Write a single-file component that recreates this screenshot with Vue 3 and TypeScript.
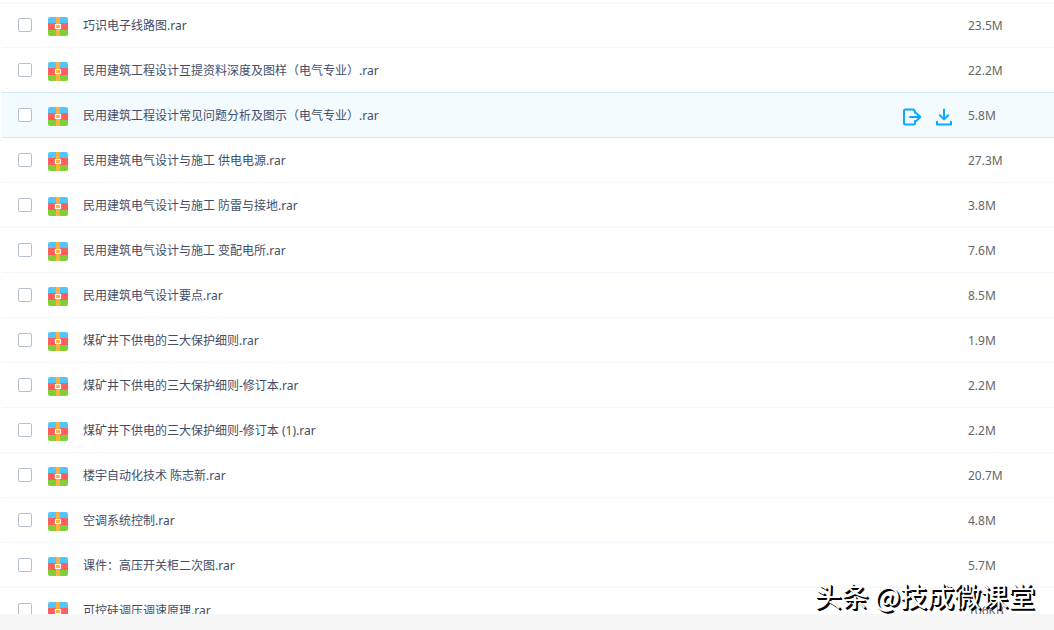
<script setup lang="ts">
import { ref } from 'vue'

interface FileItem {
  name: string
  size: string
  active?: boolean
}

const files: FileItem[] = [
  { name: '巧识电子线路图.rar', size: '23.5M' },
  { name: '民用建筑工程设计互提资料深度及图样（电气专业）.rar', size: '22.2M' },
  { name: '民用建筑工程设计常见问题分析及图示（电气专业）.rar', size: '5.8M', active: true },
  { name: '民用建筑电气设计与施工 供电电源.rar', size: '27.3M' },
  { name: '民用建筑电气设计与施工 防雷与接地.rar', size: '3.8M' },
  { name: '民用建筑电气设计与施工 变配电所.rar', size: '7.6M' },
  { name: '民用建筑电气设计要点.rar', size: '8.5M' },
  { name: '煤矿井下供电的三大保护细则.rar', size: '1.9M' },
  { name: '煤矿井下供电的三大保护细则-修订本.rar', size: '2.2M' },
  { name: '煤矿井下供电的三大保护细则-修订本 (1).rar', size: '2.2M' },
  { name: '楼宇自动化技术 陈志新.rar', size: '20.7M' },
  { name: '空调系统控制.rar', size: '4.8M' },
  { name: '课件：高压开关柜二次图.rar', size: '5.7M' },
  { name: '可控硅调压调速原理.rar', size: '106KB' },
]

const selected = ref<string[]>([])
</script>

<template>
  <div class="page">
    <main class="list">
      <table class="files">
        <tbody>
          <tr v-for="file in files" :key="file.name" :class="{ active: file.active }">
            <td class="name-cell">
              <div class="entry">
                <input
                  v-model="selected"
                  class="check"
                  type="checkbox"
                  :value="file.name"
                  :aria-label="file.name"
                />
                <svg class="archive" viewBox="0 0 20 19" aria-hidden="true">
                  <path fill="#54c5f8" d="M2 0h16a2 2 0 0 1 2 2v4H0V2a2 2 0 0 1 2-2z" />
                  <path fill="#ff5f5c" d="M0 6h20v7H0z" />
                  <path fill="#80cf38" d="M0 13h20v4a2 2 0 0 1-2 2H2a2 2 0 0 1-2-2z" />
                  <path fill="#ffb13d" d="M8 0h4v19H8z" />
                  <path fill="#ffb13d" stroke="#fff" stroke-width="1.2" d="M7.5 7.5h5v4h-5z" />
                </svg>
                <span class="name">{{ file.name }}</span>
                <span v-if="file.active" class="actions">
                  <button type="button" aria-label="分享">
                    <svg viewBox="0 0 20 18" aria-hidden="true">
                      <path d="M13 5V3.2L11.3 1.5H3.5a1.5 1.5 0 0 0-1.5 1.5v12a1.5 1.5 0 0 0 1.5 1.5h8a1.5 1.5 0 0 0 1.5-1.5v-2" />
                      <path d="M8 9h10M14.5 5.2L18.3 9l-3.8 3.8" />
                    </svg>
                  </button>
                  <button type="button" aria-label="下载">
                    <svg viewBox="0 0 20 18" aria-hidden="true">
                      <path d="M10 1.5v9.5M5.8 7.2L10 11.4l4.2-4.2M3 13.8v2.7h14v-2.7" />
                    </svg>
                  </button>
                </span>
              </div>
            </td>
            <td class="size">{{ file.size }}</td>
          </tr>
        </tbody>
      </table>
    </main>
    <footer class="bar"></footer>
    <div class="watermark">头条 @技成微课堂</div>
  </div>
</template>

<style>
body {
  margin: 0;
}
</style>

<style scoped>
.page {
  position: relative;
  display: flex;
  flex-direction: column;
  height: 100vh;
  background: #fff;
  font-family: "Noto Sans", "Noto Sans CJK SC", sans-serif;
  font-size: 12px;
  color: #424e67;
}

.list {
  flex: 1;
  min-height: 0;
  padding: 3px 0 0 2px;
  overflow: hidden;
}

.files {
  width: 100%;
  table-layout: fixed;
  border-spacing: 0;
}

td {
  box-sizing: border-box;
  height: 45px;
  padding: 0;
  border-bottom: 1px solid #f2f6fd;
  line-height: 18px;
}

tr:first-child td {
  box-shadow: inset 0 1px #f2f6fd;
}

.active td {
  background: #f4fbff;
  border-color: #cfe8fa;
  box-shadow: 0 -1px #cfe8fa;
}

.entry {
  display: flex;
  align-items: center;
  padding-left: 16px;
}

.check {
  appearance: none;
  box-sizing: border-box;
  width: 14px;
  height: 14px;
  margin: 0 16px 0 0;
  border: 1px solid #b4c0d0;
  border-radius: 2px;
  background: #fff;
}

.check:checked {
  background: #09aaff;
}

.archive {
  width: 20px;
  height: 19px;
  margin: 2px 15px 0 0;
}

.name {
  flex: 1;
  padding-top: 2px;
  overflow: hidden;
  white-space: nowrap;
  text-overflow: ellipsis;
}

.actions {
  display: flex;
  gap: 12px;
  padding: 4px 14px 0 0;
}

.actions button {
  padding: 0;
  border: 0;
  background: none;
  cursor: pointer;
}

.actions svg {
  display: block;
  width: 20px;
  height: 18px;
  fill: none;
  stroke: #09aaff;
  stroke-width: 2;
  stroke-linecap: round;
  stroke-linejoin: round;
}

td.size {
  width: 86px;
  padding-top: 2px;
  color: #666;
}

.bar {
  height: 16px;
  background: #f7f7f7;
}

.watermark {
  position: absolute;
  right: 19px;
  bottom: 14px;
  font-family: "Noto Sans CJK SC", sans-serif;
  font-size: 27px;
  line-height: 40px;
  color: #fff;
  text-shadow: 1px 1px #000, 2px 2px #000;
  white-space: nowrap;
}
</style>
